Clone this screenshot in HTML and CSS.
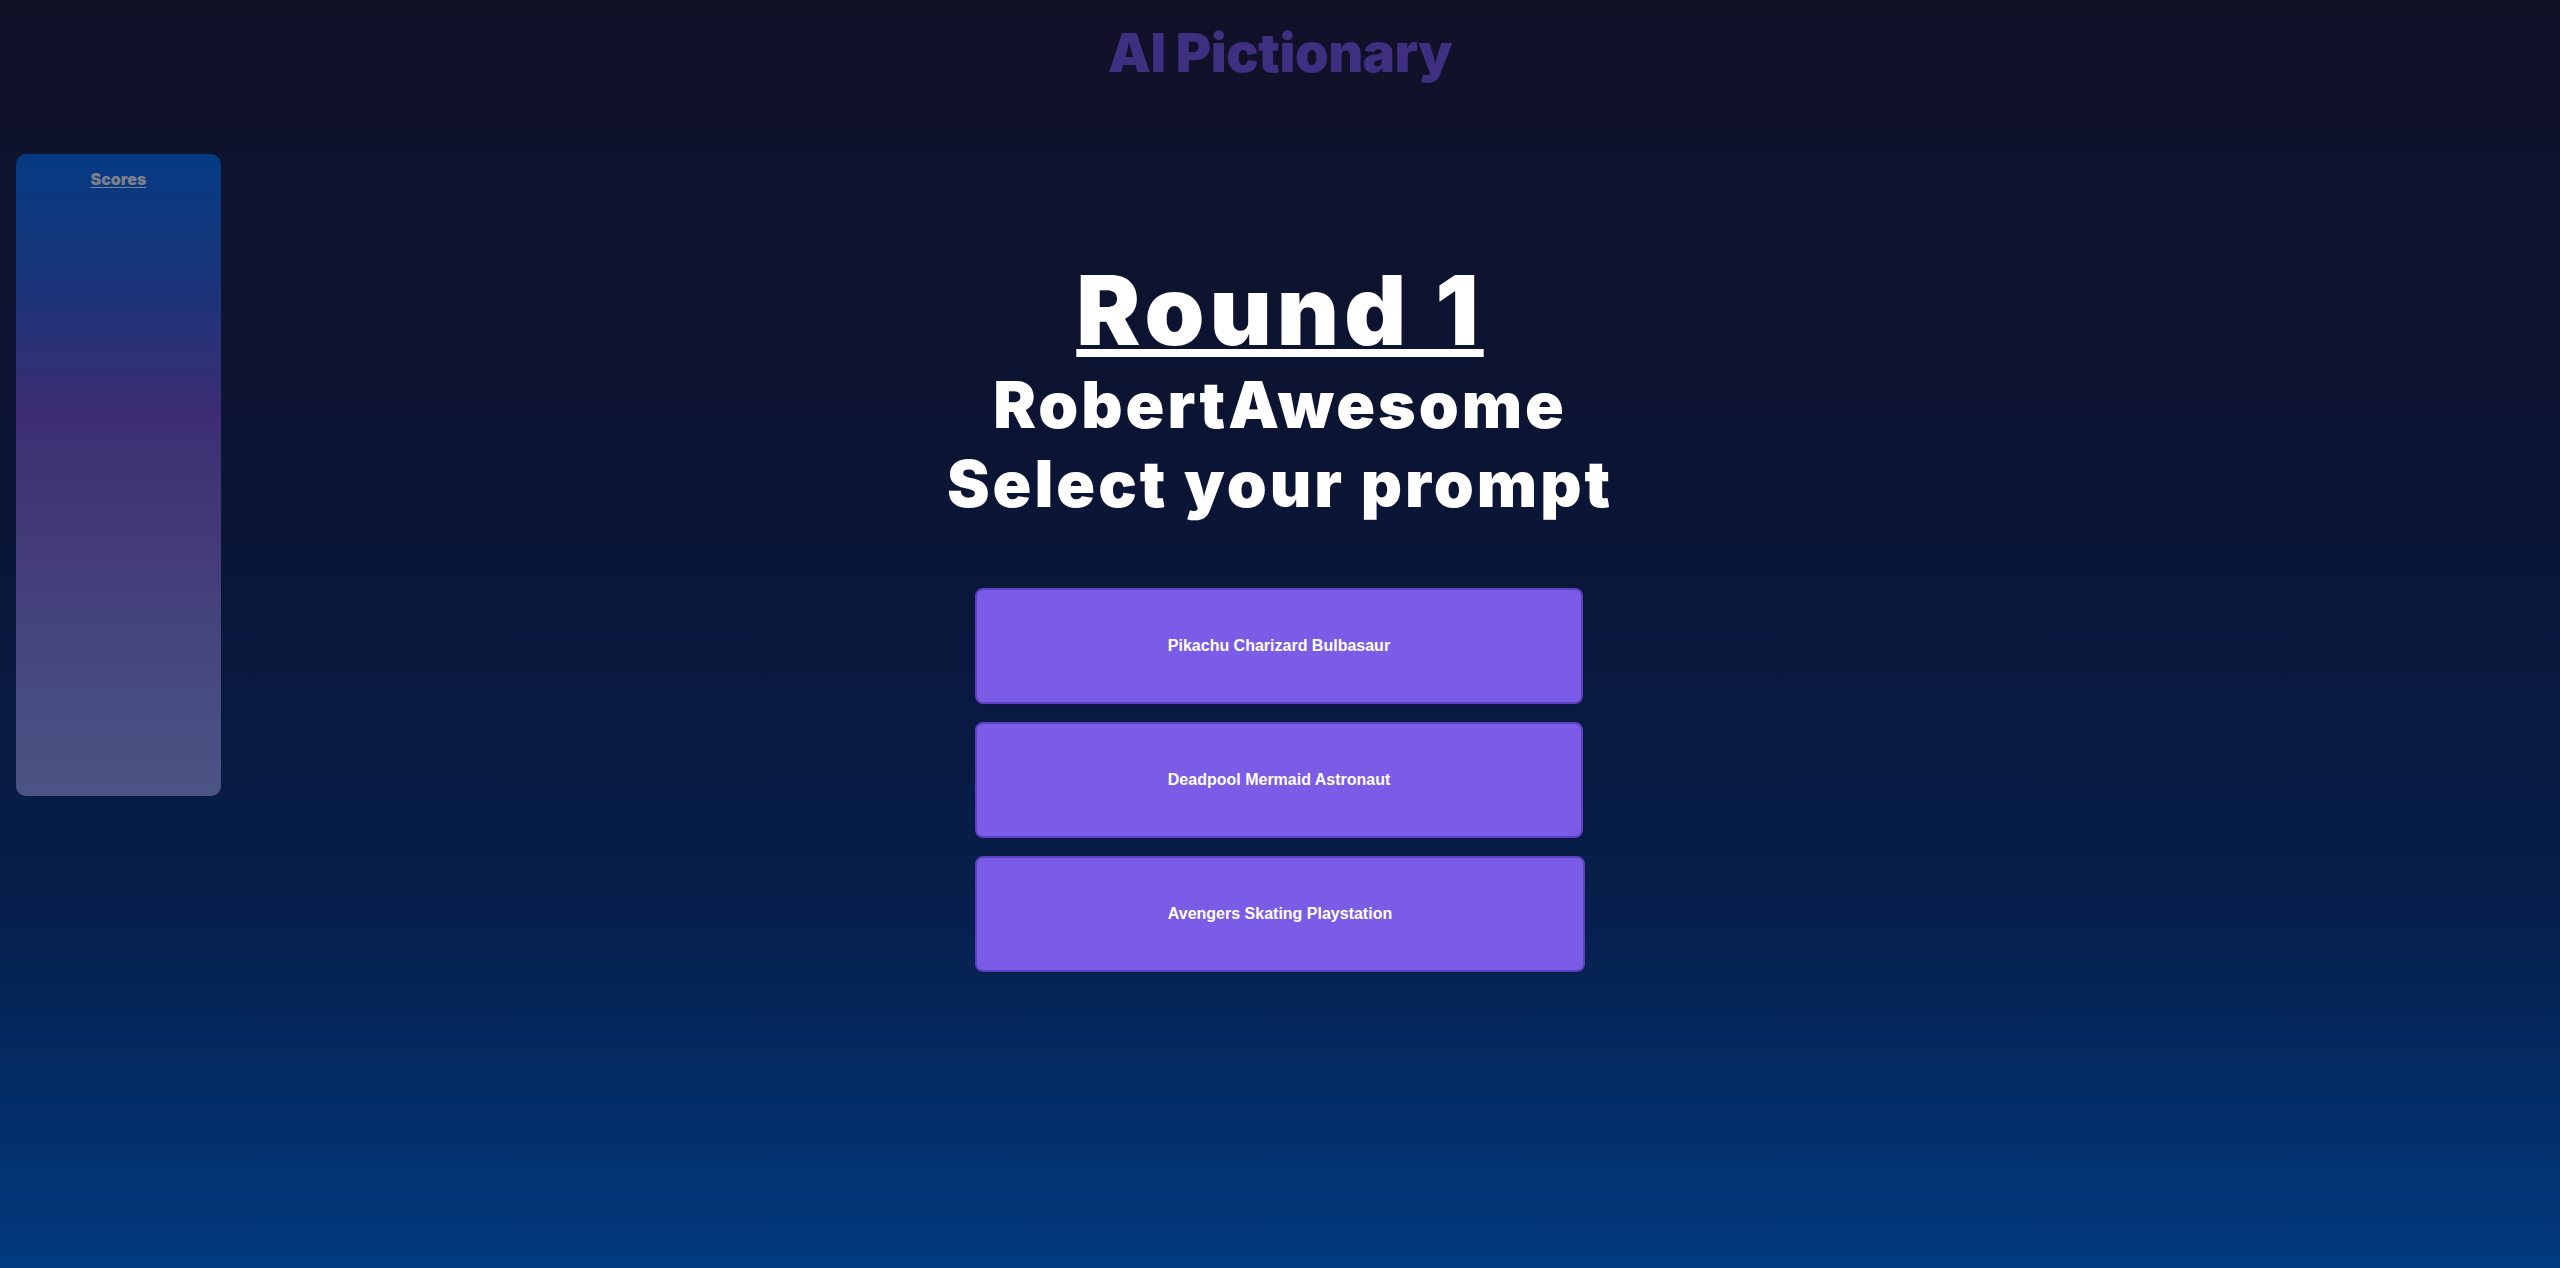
FILE: index.html
```html
<!DOCTYPE html>
<html lang="en">
<head>
<meta charset="utf-8">
<title>AI Pictionary</title>
<link rel="stylesheet" href="styles.css">
</head>
<body>
<div class="app">
  <header class="header">
    <h1 class="logo">AI Pictionary</h1>
  </header>
  <div class="layout">
    <aside class="scores">
      <h3 class="scores-title">Scores</h3>
    </aside>
    <main class="main">
      <h1 class="round">Round 1</h1>
      <div class="subtitle">
        <div class="sub-line">RobertAwesome</div>
        <div class="sub-line">Select your prompt</div>
      </div>
      <div class="prompts">
        <button class="prompt">Pikachu Charizard Bulbasaur</button>
        <button class="prompt">Deadpool Mermaid Astronaut</button>
        <button class="prompt">Avengers Skating Playstation</button>
      </div>
    </main>
    <div class="spacer"></div>
  </div>
</div>
</body>
</html>
```

FILE: styles.css
```css
* { box-sizing: border-box; }

html, body {
  margin: 0;
  padding: 0;
  height: 100%;
}

body {
  font-family: Inter, "Noto Sans", sans-serif;
  background: linear-gradient(180deg, #111128 0%, #0b1535 40%, #061f4c 72%, #013a7f 100%);
  color: #fff;
  min-height: 1268px;
}

.app {
  min-height: 1268px;
}

.header {
  display: flex;
  justify-content: center;
  padding-top: 26px;
}

.logo {
  margin: 0;
  font-size: 54px;
  line-height: 1;
  font-weight: 900;
  color: #3e2f80;
  letter-spacing: -0.5px;
}

.layout {
  display: grid;
  grid-template-columns: 205px 1fr 205px;
  padding: 0 16px;
  margin-top: 74px;
  align-items: start;
}

.scores {
  height: 642px;
  border-radius: 10px;
  background: linear-gradient(180deg, #033a82 0%, #1d3479 22%, #3c2d72 40%, #433a78 60%, #464a7f 82%, #4b5585 100%);
  display: flex;
  flex-direction: column;
  align-items: center;
  padding-top: 15px;
}

.scores-title {
  margin: 0;
  font-size: 16px;
  font-weight: 900;
  color: #7d808c;
  text-decoration: underline;
  text-underline-offset: 2px;
}

.main {
  display: flex;
  flex-direction: column;
  align-items: center;
  padding-top: 108px;
}

.round {
  margin: 0;
  font-size: 96px;
  line-height: 1;
  font-weight: 900;
  letter-spacing: 5px;
  text-decoration: underline;
  text-decoration-thickness: 8px;
  text-underline-offset: 4px;
}

.subtitle {
  margin-top: 7px;
  display: flex;
  flex-direction: column;
  align-items: center;
}

.sub-line {
  font-size: 64px;
  line-height: 79px;
  font-weight: 900;
  letter-spacing: 3px;
}

.prompts {
  margin-top: 65px;
  display: flex;
  flex-direction: column;
  align-items: flex-start;
  gap: 18px;
}

.prompt {
  height: 116px;
  padding: 0 191px;
  border: 2px solid #5d41bf;
  border-radius: 8px;
  background: #7b5ce6;
  color: #fff;
  font-family: "Liberation Sans", Arial, sans-serif;
  font-size: 16px;
  font-weight: 700;
  box-shadow: 0 1px 1px rgba(20, 10, 60, 0.5);
  cursor: pointer;
}
```
